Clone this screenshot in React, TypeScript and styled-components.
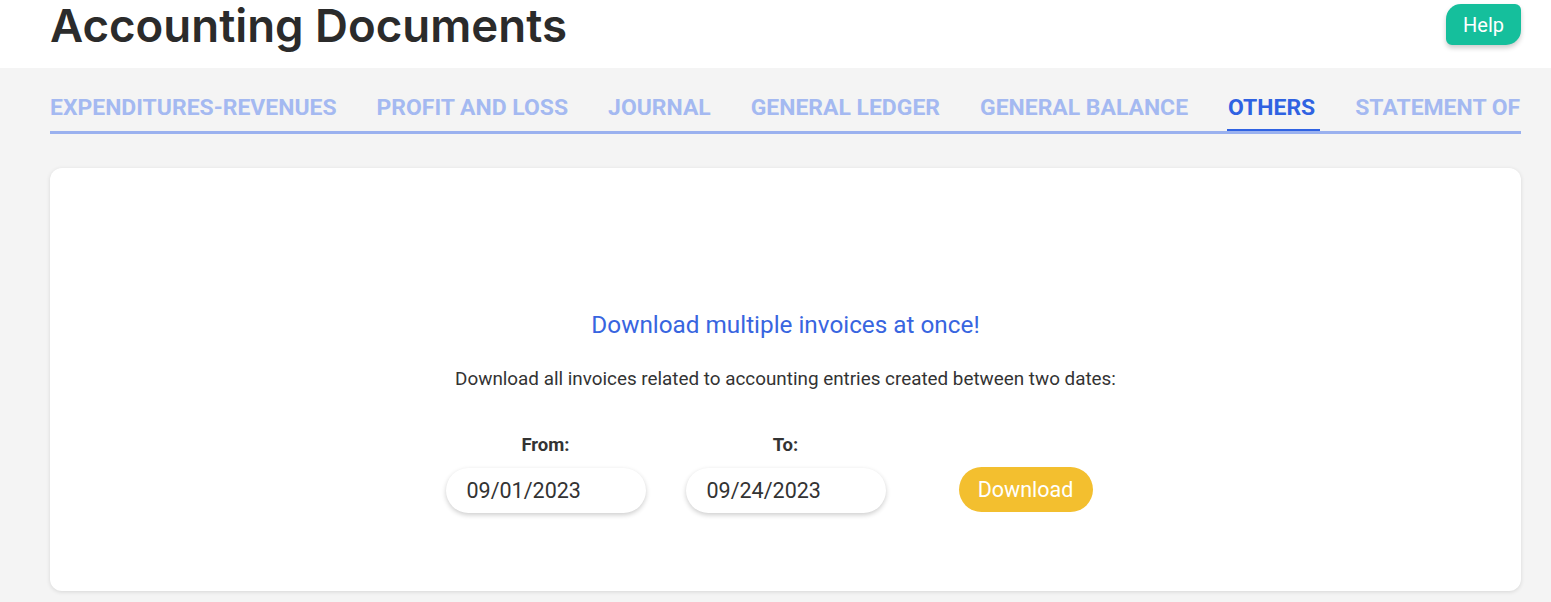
import React from "react";
import styled, { createGlobalStyle } from "styled-components";

const GlobalStyle = createGlobalStyle`
  * { box-sizing: border-box; }
  html, body { margin: 0; padding: 0; }
  body {
    background: #f4f4f4;
    font-family: Roboto, "Liberation Sans", Arial, sans-serif;
    color: #333;
  }
`;

const Page = styled.div`
  display: flex;
  flex-direction: column;
  min-height: 602px;
`;

const Header = styled.header`
  background: #ffffff;
  height: 68px;
  display: flex;
  justify-content: space-between;
  align-items: flex-start;
  padding: 0 30px 0 50px;
`;

const Title = styled.h1`
  margin: 0;
  font-family: Inter, "Noto Sans", sans-serif;
  font-weight: 600;
  font-size: 45.6px;
  line-height: 51px;
  color: #2b2b2b;
`;

const HelpButton = styled.button`
  margin-top: 4px;
  width: 75px;
  height: 41px;
  border: none;
  border-radius: 15px 6px 15px 6px;
  background: #15bf9c;
  color: #ffffff;
  font-family: Roboto, sans-serif;
  font-size: 20px;
  box-shadow: 0 3px 5px rgba(0, 0, 0, 0.2);
  cursor: pointer;
`;

const Main = styled.main`
  padding: 0 30px 0 50px;
  display: flex;
  flex-direction: column;
`;

const TabBar = styled.nav`
  margin-top: 27px;
  display: flex;
  gap: 40px;
  overflow: hidden;
  border-bottom: 3px solid #9ab1ef;
  white-space: nowrap;
`;

const Tab = styled.div<{ $active?: boolean }>`
  position: relative;
  flex: none;
  font-family: Roboto, sans-serif;
  font-weight: 700;
  font-size: 22.95px;
  line-height: 26px;
  padding-bottom: 10px;
  text-transform: uppercase;
  color: ${(p) => (p.$active ? "#2f62e2" : "#a4b9f1")};
  &::after {
    content: "";
    display: ${(p) => (p.$active ? "block" : "none")};
    position: absolute;
    left: -1px;
    right: -5px;
    bottom: -3px;
    height: 5px;
    background: #2f62e2;
  }
`;

const Card = styled.section`
  margin-top: 34px;
  height: 423px;
  background: #ffffff;
  border-radius: 12px;
  box-shadow: 0 1px 4px rgba(0, 0, 0, 0.12);
  display: flex;
  flex-direction: column;
  align-items: center;
  padding-top: 142px;
`;

const Heading = styled.h2`
  margin: 0;
  font-weight: 400;
  font-size: 24.3px;
  line-height: 30px;
  color: #3865e0;
`;

const Subtitle = styled.p`
  margin: 28px 0 0;
  font-size: 18.85px;
  line-height: 22px;
  color: #333333;
`;

const FormRow = styled.div`
  margin-top: 44px;
  display: grid;
  grid-template-columns: repeat(3, 200px);
  column-gap: 40px;
  align-items: end;
`;

const Field = styled.div`
  display: flex;
  flex-direction: column;
  align-items: center;
  gap: 12px;
`;

const Label = styled.label`
  font-weight: 700;
  font-size: 18.5px;
  line-height: 22px;
  color: #333333;
`;

const DateInput = styled.div`
  width: 200px;
  height: 45px;
  border-radius: 23px;
  background: #ffffff;
  box-shadow: 0 2px 5px rgba(0, 0, 0, 0.2);
  display: flex;
  align-items: center;
  padding-left: 21px;
  font-size: 21.5px;
  color: #333333;
`;

const ButtonCell = styled.div`
  display: flex;
  justify-content: center;
`;

const DownloadButton = styled.button`
  width: 134px;
  height: 45px;
  border: none;
  border-radius: 23px;
  background: #f3bf2f;
  color: #ffffff;
  font-family: Roboto, sans-serif;
  font-size: 21.5px;
  cursor: pointer;
  margin-bottom: 1px;
`;

const tabs = [
  "Expenditures-revenues",
  "Profit and loss",
  "Journal",
  "General ledger",
  "General balance",
  "Others",
  "Statement of changes",
];

export default function App() {
  return (
    <>
      <GlobalStyle />
      <Page>
        <Header>
          <Title>Accounting Documents</Title>
          <HelpButton>Help</HelpButton>
        </Header>
        <Main>
          <TabBar>
            {tabs.map((t) => (
              <Tab key={t} $active={t === "Others"}>
                {t}
              </Tab>
            ))}
          </TabBar>
          <Card>
            <Heading>Download multiple invoices at once!</Heading>
            <Subtitle>
              Download all invoices related to accounting entries created between two dates:
            </Subtitle>
            <FormRow>
              <Field>
                <Label>From:</Label>
                <DateInput>09/01/2023</DateInput>
              </Field>
              <Field>
                <Label>To:</Label>
                <DateInput>09/24/2023</DateInput>
              </Field>
              <ButtonCell>
                <DownloadButton>Download</DownloadButton>
              </ButtonCell>
            </FormRow>
          </Card>
        </Main>
      </Page>
    </>
  );
}
